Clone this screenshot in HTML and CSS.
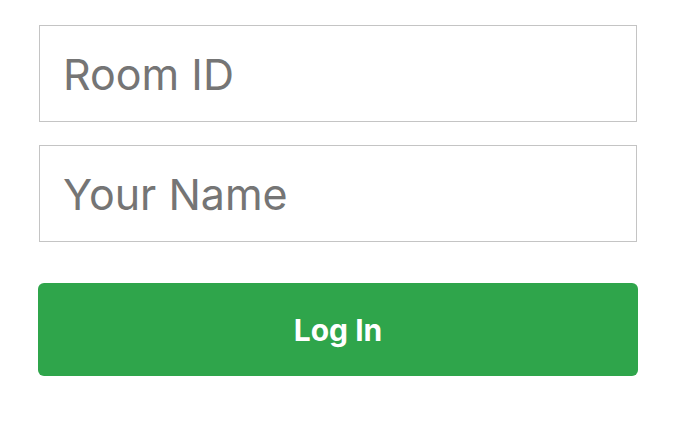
FILE: index.html
```html
<!DOCTYPE html>
<html>
<head>
<meta charset="utf-8">
<link rel="stylesheet" href="styles.css">
</head>
<body>
<form class="login">
  <input class="field" type="text" placeholder="Room ID">
  <input class="field field-name" type="text" placeholder="Your Name">
  <button class="submit" type="button">Log In</button>
</form>
</body>
</html>
```
FILE: styles.css
```css
html, body {
  margin: 0;
  background: #fff;
}
.login {
  display: flex;
  flex-direction: column;
  width: 600px;
  padding: 25px 0 0 38px;
  font-family: Inter, "Liberation Sans", Arial, sans-serif;
}
.field {
  box-sizing: border-box;
  width: 598px;
  height: 97px;
  margin: 0 1px;
  padding: 0 0 0 23px;
  border: 1px solid #c4c4c4;
  border-radius: 0;
  font-family: inherit;
  font-size: 43px;
  color: #333;
  outline: none;
}
.field::placeholder {
  color: #757575;
  opacity: 1;
}
.field-name {
  margin-top: 23px;
}
.submit {
  margin-top: 41px;
  width: 600px;
  height: 93px;
  border: none;
  border-radius: 6px;
  background: #2fa54b;
  color: #fff;
  font-family: inherit;
  font-weight: bold;
  font-size: 30px;
}
```
